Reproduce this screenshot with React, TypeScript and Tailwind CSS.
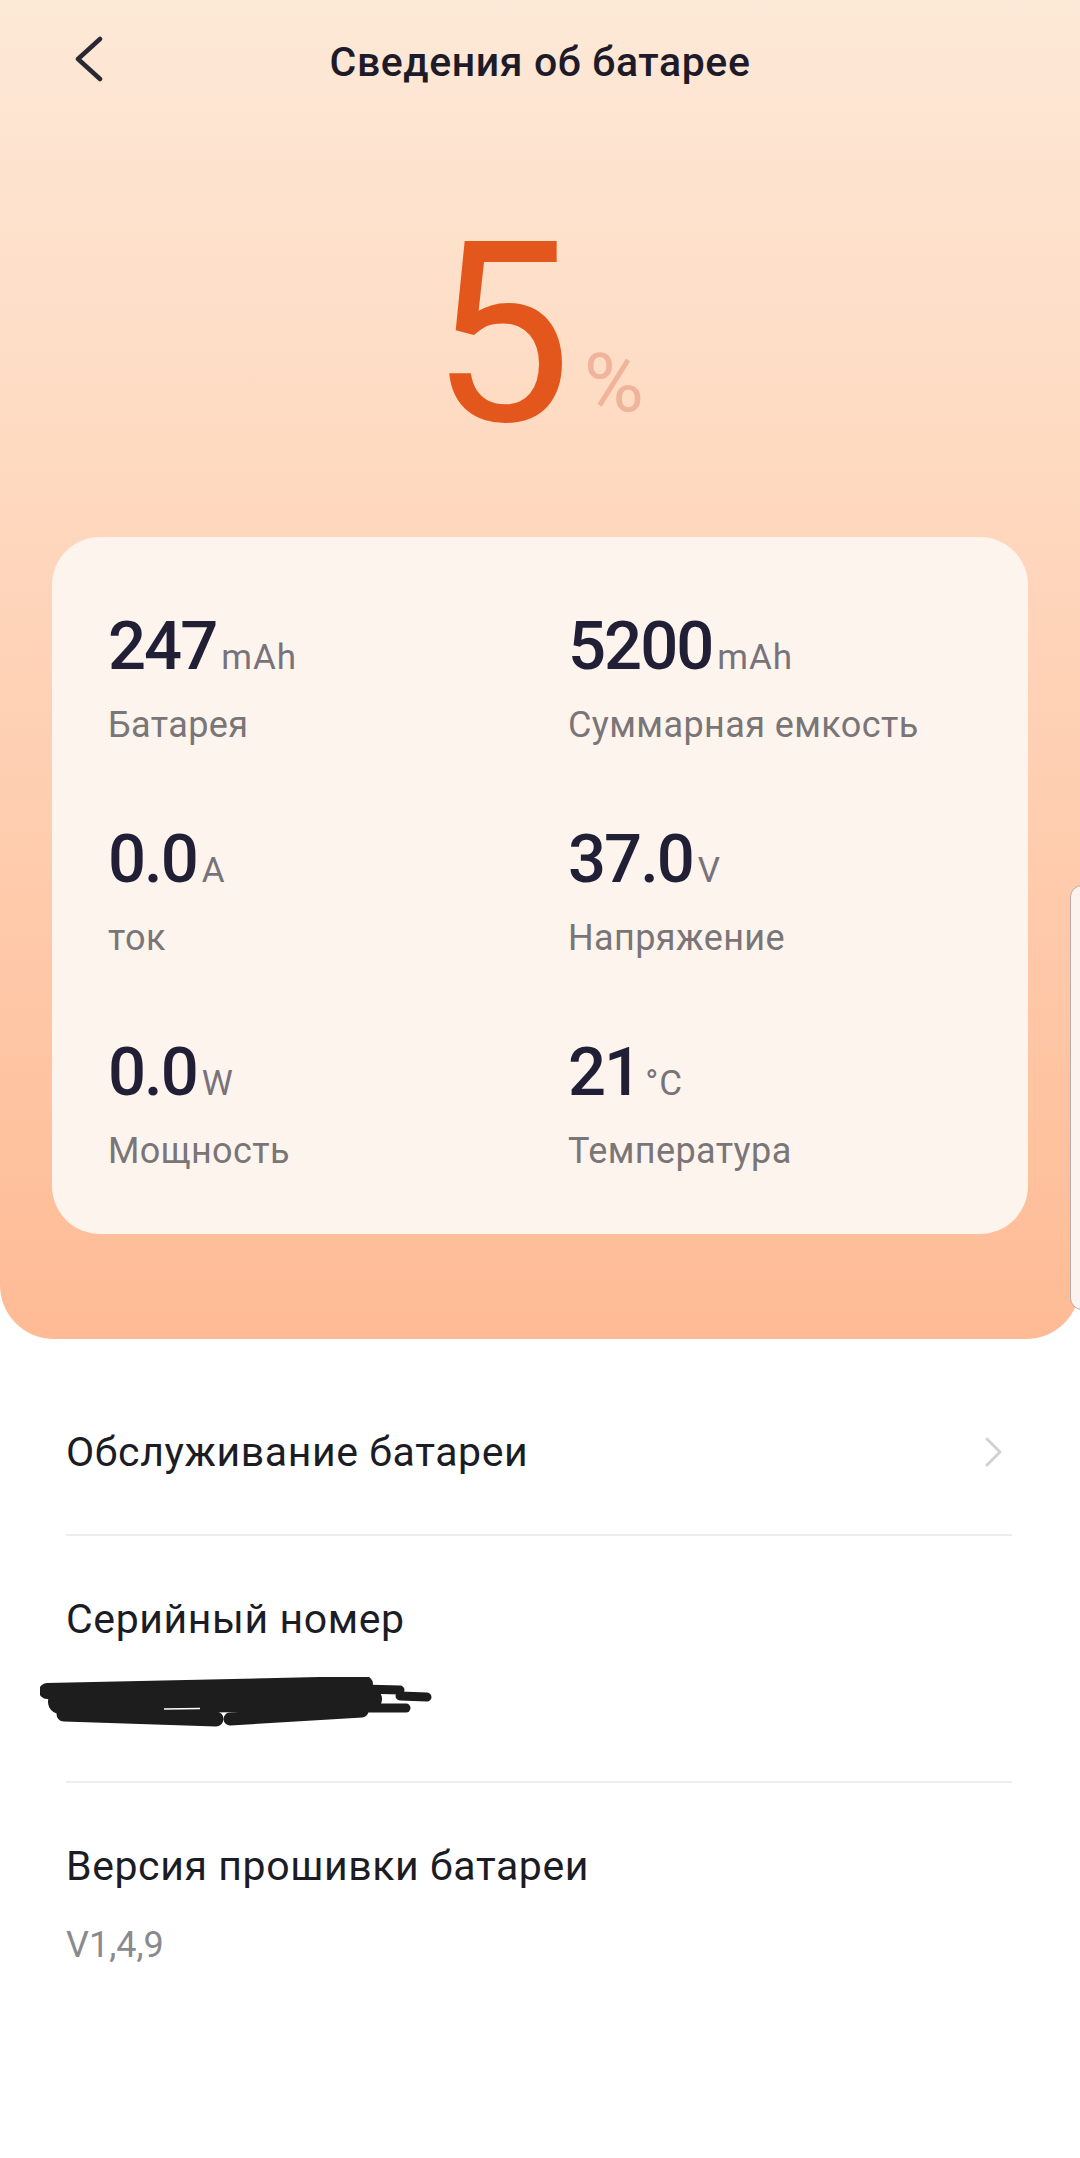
import React from "react";

type Stat = {
  value: string;
  unit: string;
  label: string;
};

const stats: Stat[] = [
  { value: "247", unit: "mAh", label: "Батарея" },
  { value: "5200", unit: "mAh", label: "Суммарная емкость" },
  { value: "0.0", unit: "A", label: "ток" },
  { value: "37.0", unit: "V", label: "Напряжение" },
  { value: "0.0", unit: "W", label: "Мощность" },
  { value: "21", unit: "°C", label: "Температура" },
];

function BackIcon() {
  return (
    <svg width="31" height="46" viewBox="0 0 31 46" className="mb-[6px] ml-[73px]">
      <polyline
        points="27,3 5,23 27,43"
        fill="none"
        stroke="#2a2833"
        strokeWidth="4.5"
        strokeLinecap="round"
        strokeLinejoin="round"
      />
    </svg>
  );
}

function ChevronRight() {
  return (
    <svg width="22" height="32" viewBox="0 0 22 32" className="mr-[8px]">
      <polyline
        points="5,3 18,16 5,29"
        fill="none"
        stroke="#d2d2d4"
        strokeWidth="3"
        strokeLinecap="round"
        strokeLinejoin="round"
      />
    </svg>
  );
}

// hand-drawn redaction over the serial number
function Scribble() {
  return (
    <svg width="392" height="50" viewBox="0 0 392 50" className="ml-[-26px] mt-[38px]">
      <g stroke="#1d1d1d" strokeLinecap="round" fill="none">
        <line x1="7" y1="14" x2="325" y2="7" strokeWidth="16" />
        <line x1="20" y1="25" x2="330" y2="22" strokeWidth="24" />
        <line x1="24" y1="37" x2="176" y2="42" strokeWidth="15" />
        <line x1="190" y1="42" x2="322" y2="34" strokeWidth="13" />
        <line x1="322" y1="12" x2="360" y2="13" strokeWidth="9" />
        <line x1="360" y1="19" x2="387" y2="20" strokeWidth="9" />
        <line x1="326" y1="31" x2="366" y2="31" strokeWidth="9" />
      </g>
      <line x1="124" y1="32" x2="160" y2="31.5" stroke="#ffffff" strokeWidth="1.5" />
    </svg>
  );
}

function StatCell({ stat }: { stat: Stat }) {
  return (
    <div className="flex flex-col">
      <div className="flex items-baseline">
        <span className="text-[67px] leading-[67px] font-medium tracking-[-2px] text-[#211f35]">
          {stat.value}
        </span>
        <span className="ml-[5px] text-[35px] leading-[35px] tracking-[1px] text-[#78737a]">
          {stat.unit}
        </span>
      </div>
      <span className="mt-[27px] text-[36px] leading-[36px] tracking-[0.4px] text-[#7a7577]">
        {stat.label}
      </span>
    </div>
  );
}

export default function App() {
  return (
    <div className="relative w-full min-h-[2158px] overflow-hidden bg-white font-[Roboto,sans-serif]">
      <div className="bg-gradient-to-b from-[#fde9d7] to-[#febb95] rounded-b-[54px] pb-[105px]">
        <div className="grid h-[124px] grid-cols-[1fr_auto_1fr] items-center">
          <div className="flex items-center">
            <BackIcon />
          </div>
          <h1 className="text-[41px] leading-[40px] font-medium tracking-[0.6px] text-[#1d1b29]">
            Сведения об батарее
          </h1>
          <div />
        </div>

        <div className="mt-[86px] flex items-end justify-center pr-[6px]">
          <span className="text-[252px] leading-[250px] text-[#e3571c]">5</span>
          <span className="mb-[37px] ml-[12px] text-[82px] leading-[80px] text-[#efb49a]">
            %
          </span>
        </div>

        <div className="mx-[52px] mt-[77px] grid grid-cols-[460px_1fr] gap-y-[83px] rounded-[48px] bg-[#fdf4ee] px-[56px] pt-[76px] pb-[65px]">
          {stats.map((s, i) => (
            <StatCell key={i} stat={s} />
          ))}
        </div>
      </div>

      <div className="flex flex-col pt-[93px] pl-[66px] pr-[68px]">
        <div className="flex items-center justify-between pb-[62px]">
          <span className="text-[41px] leading-[40px] tracking-[0.6px] text-[#1c1c24]">
            Обслуживание батареи
          </span>
          <ChevronRight />
        </div>
        <div className="h-[2px] bg-[#ededed]" />

        <div className="flex flex-col pt-[63px] pb-[54px]">
          <span className="text-[41px] leading-[40px] tracking-[0.6px] text-[#1c1c24]">
            Серийный номер
          </span>
          <Scribble />
        </div>
        <div className="h-[2px] bg-[#ededed]" />

        <div className="flex flex-col pt-[63px]">
          <span className="text-[41px] leading-[40px] tracking-[0.6px] text-[#1c1c24]">
            Версия прошивки батареи
          </span>
          <span className="mt-[41px] text-[36px] leading-[36px] text-[#8a8a8e]">V1,4,9</span>
        </div>
      </div>

      {/* edge panel handle peeking in from the right */}
      <div className="absolute left-[1070px] top-[885px] h-[425px] w-[24px] rounded-l-[12px] border border-[#b8aaa6] bg-[#fdf3ee]" />
    </div>
  );
}
